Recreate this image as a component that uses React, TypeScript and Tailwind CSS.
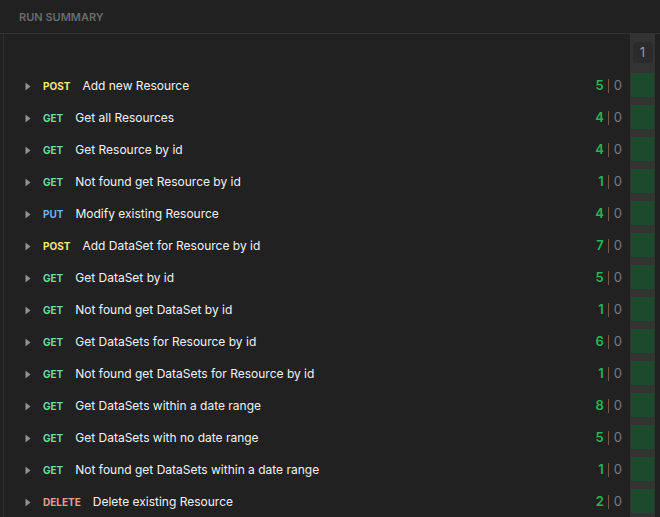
const runs = [
  { method: 'POST', name: 'Add new Resource', pass: 5 },
  { method: 'GET', name: 'Get all Resources', pass: 4 },
  { method: 'GET', name: 'Get Resource by id', pass: 4 },
  { method: 'GET', name: 'Not found get Resource by id', pass: 1 },
  { method: 'PUT', name: 'Modify existing Resource', pass: 4 },
  { method: 'POST', name: 'Add DataSet for Resource by id', pass: 7 },
  { method: 'GET', name: 'Get DataSet by id', pass: 5 },
  { method: 'GET', name: 'Not found get DataSet by id', pass: 1 },
  { method: 'GET', name: 'Get DataSets for Resource by id', pass: 6 },
  { method: 'GET', name: 'Not found get DataSets for Resource by id', pass: 1 },
  { method: 'GET', name: 'Get DataSets within a date range', pass: 8 },
  { method: 'GET', name: 'Get DataSets with no date range', pass: 5 },
  { method: 'GET', name: 'Not found get DataSets within a date range', pass: 1 },
  { method: 'DELETE', name: 'Delete existing Resource', pass: 2 },
];

const methodColor: Record<string, string> = {
  GET: 'text-[#6bdd9a]',
  POST: 'text-[#ffe47e]',
  PUT: 'text-[#74aef6]',
  DELETE: 'text-[#f79a8e]',
};

export default function App() {
  return (
    <div className="w-[660px] h-[517px] overflow-hidden bg-[#212121] font-['Inter',sans-serif] flex flex-col">
      <div className="h-[34px] shrink-0 border-b border-[#333] pl-[19px] pt-[2px] flex items-center">
        <span className="text-[11px] font-semibold text-[#6b6b6b]">RUN SUMMARY</span>
      </div>
      <div className="flex flex-1 min-h-0 ml-[3px] border-l border-[#2c2c2c] pr-[5px]">
        <div className="flex-1 pt-[36px]">
          {runs.map((r, i) => (
            <div key={i} className="h-8 flex items-center pl-[21px] pr-2">
              <svg width="6" height="9" viewBox="0 0 6 9" className="shrink-0">
                <path d="M0.5 0.5 L5.5 4.5 L0.5 8.5 Z" fill="#8f8f8f" />
              </svg>
              <span className={`ml-[12px] text-[10px] font-bold ${methodColor[r.method]}`}>{r.method}</span>
              <span className="ml-3 text-xs text-[#f2f2f2]">{r.name}</span>
              <div className="ml-auto flex items-center text-[13px]">
                <span className="text-[#1fb954] font-semibold">{r.pass}</span>
                <span className="ml-[4px] mr-[5px] w-px h-[14px] bg-[#6e5d4e]" />
                <span className="text-[#7a7a7a]">0</span>
              </div>
            </div>
          ))}
        </div>
        <div className="w-[25px] bg-[#333333] flex flex-col">
          <div className="h-[40px] flex items-start justify-center">
            <div className="w-[20px] h-[21px] mt-[8px] rounded bg-[#2b2b2b] flex items-center justify-center text-[13px] text-[#9a9a9a]">1</div>
          </div>
          {runs.map((r, i) => (
            <div key={i} className="h-8 py-1 px-px">
              <div className="h-6 bg-[#1d4a2c]" />
            </div>
          ))}
        </div>
      </div>
    </div>
  );
}
